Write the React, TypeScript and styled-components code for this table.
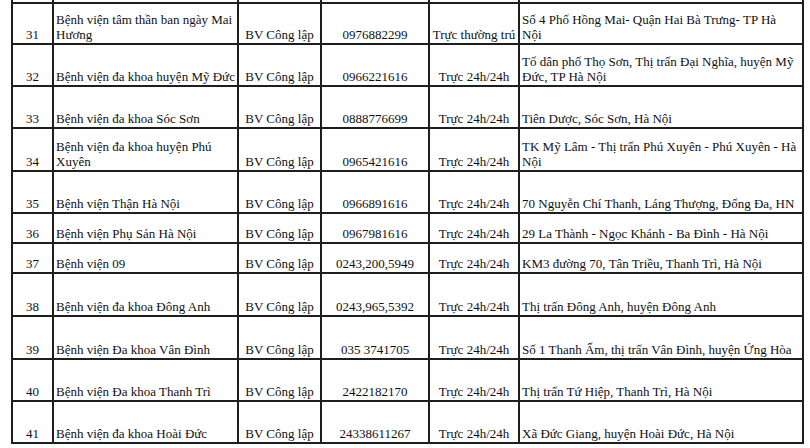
import React from 'react';
import styled, { createGlobalStyle } from 'styled-components';

type Row = {
  no: number;
  name: string;
  type: string;
  phone: string;
  duty: string;
  address: string;
  height: number;
};

const rows: Row[] = [
  { no: 31, name: 'Bệnh viện tâm thần ban ngày Mai Hương', type: 'BV Công lập', phone: '0976882299', duty: 'Trực thường trú', address: 'Số 4 Phố Hồng Mai- Quận Hai Bà Trưng- TP Hà Nội', height: 41 },
  { no: 32, name: 'Bệnh viện đa khoa huyện Mỹ Đức', type: 'BV Công lập', phone: '0966221616', duty: 'Trực 24h/24h', address: 'Tổ dân phố Thọ Sơn, Thị trấn Đại Nghĩa, huyện Mỹ Đức, TP Hà Nội', height: 42 },
  { no: 33, name: 'Bệnh viện đa khoa Sóc Sơn', type: 'BV Công lập', phone: '0888776699', duty: 'Trực 24h/24h', address: 'Tiên Dược, Sóc Sơn, Hà Nội', height: 42 },
  { no: 34, name: 'Bệnh viện đa khoa huyện Phú Xuyên', type: 'BV Công lập', phone: '0965421616', duty: 'Trực 24h/24h', address: 'TK Mỹ Lâm - Thị trấn Phú Xuyên - Phú Xuyên - Hà Nội', height: 43 },
  { no: 35, name: 'Bệnh viện Thận Hà Nội', type: 'BV Công lập', phone: '0966891616', duty: 'Trực 24h/24h', address: '70 Nguyễn Chí Thanh, Láng Thượng, Đống Đa, HN', height: 42 },
  { no: 36, name: 'Bệnh viện Phụ Sản Hà Nội', type: 'BV Công lập', phone: '0967981616', duty: 'Trực 24h/24h', address: '29 La Thành - Ngọc Khánh - Ba Đình - Hà Nội', height: 30 },
  { no: 37, name: 'Bệnh viện 09', type: 'BV Công lập', phone: '0243,200,5949', duty: 'Trực 24h/24h', address: 'KM3 đường 70, Tân Triều, Thanh Trì, Hà Nội', height: 30 },
  { no: 38, name: 'Bệnh viện đa khoa Đông Anh', type: 'BV Công lập', phone: '0243,965,5392', duty: 'Trực 24h/24h', address: 'Thị trấn Đông Anh, huyện Đông Anh', height: 43 },
  { no: 39, name: 'Bệnh viện Đa khoa Vân Đình', type: 'BV Công lập', phone: '035 3741705', duty: 'Trực 24h/24h', address: 'Số 1 Thanh Ấm, thị trấn Vân Đình, huyện Ứng Hòa', height: 43 },
  { no: 40, name: 'Bệnh viện Đa khoa Thanh Trì', type: 'BV Công lập', phone: '2422182170', duty: 'Trực 24h/24h', address: 'Thị trấn Tứ Hiệp, Thanh Trì, Hà Nội', height: 42 },
  { no: 41, name: 'Bệnh viện đa khoa Hoài Đức', type: 'BV Công lập', phone: '24338611267', duty: 'Trực 24h/24h', address: 'Xã Đức Giang, huyện Hoài Đức, Hà Nội', height: 42 },
];

const colWidths = [41, 185, 83, 108, 90, 284];

function App() {
  return (
    <>
      <GlobalStyle />
      <Sheet>
        <Table>
          <colgroup>
            {colWidths.map((w, i) => (
              <col key={i} style={{ width: w }} />
            ))}
          </colgroup>
          <tbody>
            {/* bottom sliver of the previous row, cut off by the screenshot */}
            <SliverRow>
              {colWidths.map((_, i) => (
                <td key={i} />
              ))}
            </SliverRow>
            {rows.map(r => (
              <tr key={r.no} style={{ height: r.height }}>
                <Cell $align='center'>{r.no}</Cell>
                <Cell $align='left'>{r.name}</Cell>
                <Cell $align='center'>{r.type}</Cell>
                <Cell $align='center'>{r.phone}</Cell>
                <Cell $align='center' $nowrap>{r.duty}</Cell>
                <AddressCell>{r.address}</AddressCell>
              </tr>
            ))}
          </tbody>
        </Table>
      </Sheet>
    </>
  );
}

export default App;

const GlobalStyle = createGlobalStyle`
  html, body {
    margin: 0;
    padding: 0;
    background: #ffffff;
  }
  body {
    width: 810px;
    height: 448px;
    overflow: hidden;
    font-family: "Liberation Serif", "Times New Roman", serif;
  }
`;

const Sheet = styled.div`
  padding-left: 11px;
  margin-top: -8px;
`;

const Table = styled.table`
  border-collapse: collapse;
  table-layout: fixed;
  width: 791px;
  font-family: "Liberation Serif", "Times New Roman", serif;
  font-size: 13px;
  line-height: 15px;
  color: #101010;

  td {
    border: 2px solid #1e1e1e;
  }
`;

const SliverRow = styled.tr`
  height: 11px;
  td {
    padding: 0;
    border-top: none;
  }
`;

const Cell = styled.td<{ $align: 'left' | 'center'; $nowrap?: boolean }>`
  vertical-align: bottom;
  text-align: ${p => p.$align};
  padding: 0 ${p => (p.$align === 'left' ? 0 : 1)}px 1px ${p => (p.$align === 'left' ? 2 : 1)}px;
  white-space: ${p => (p.$nowrap ? 'nowrap' : 'normal')};
  overflow: hidden;
`;

const AddressCell = styled.td`
  vertical-align: bottom;
  text-align: left;
  padding: 0 4px 1px 2px;
  overflow: hidden;
`;
